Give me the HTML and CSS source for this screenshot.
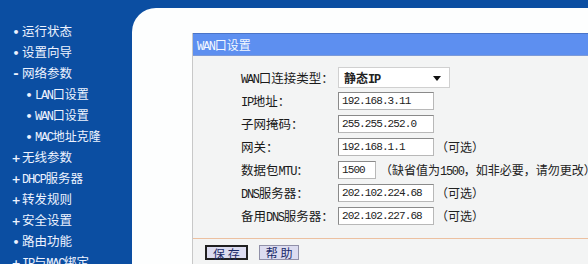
FILE: index.html
```html
<!DOCTYPE html>
<html lang="zh-CN">
<head>
    <meta charset="UTF-8">
    <title>WAN口设置</title>
    <link rel="stylesheet" href="styles.css">
</head>
<body>
    <div class="page">
        <ul class="menu">
            <li><span class="mark">•</span>运行状态</li>
            <li><span class="mark">•</span>设置向导</li>
            <li><span class="mark minus">-</span>网络参数</li>
            <li class="sub"><span class="mark">•</span><span class="lat">LAN</span>口设置</li>
            <li class="sub"><span class="mark">•</span><span class="lat">WAN</span>口设置</li>
            <li class="sub"><span class="mark">•</span><span class="lat">MAC</span>地址克隆</li>
            <li><span class="mark">+</span>无线参数</li>
            <li><span class="mark">+</span><span class="lat">DHCP</span>服务器</li>
            <li><span class="mark">+</span>转发规则</li>
            <li><span class="mark">+</span>安全设置</li>
            <li><span class="mark">•</span>路由功能</li>
            <li><span class="mark">+</span><span class="lat">IP</span>与<span class="lat">MAC</span>绑定</li>
        </ul>

        <div class="main">
            <div class="panel">
                <div class="panel-title"><span class="lat">WAN</span>口设置</div>
                <div class="form">
                    <div class="row">
                        <label><span class="lat">WAN</span>口连接类型：</label>
                        <div class="select">静态<span class="lat">IP</span><span class="arrow"></span></div>
                    </div>
                    <div class="row">
                        <label><span class="lat">IP</span>地址：</label>
                        <div class="input">192.168.3.11</div>
                    </div>
                    <div class="row">
                        <label>子网掩码：</label>
                        <div class="input">255.255.252.0</div>
                    </div>
                    <div class="row">
                        <label>网关：</label>
                        <div class="input">192.168.1.1</div>
                        <span class="note">（可选）</span>
                    </div>
                    <div class="row">
                        <label>数据包<span class="lat">MTU</span>：</label>
                        <div class="input short">1500</div>
                        <span class="note hint">（缺省值为<span class="lat">1500</span>，如非必要，请勿更改）</span>
                    </div>
                    <div class="row">
                        <label><span class="lat">DNS</span>服务器：</label>
                        <div class="input">202.102.224.68</div>
                        <span class="note">（可选）</span>
                    </div>
                    <div class="row">
                        <label>备用<span class="lat">DNS</span>服务器：</label>
                        <div class="input">202.102.227.68</div>
                        <span class="note">（可选）</span>
                    </div>
                </div>
                <div class="actions">
                    <button class="btn primary">保 存</button>
                    <button class="btn">帮 助</button>
                </div>
            </div>
        </div>
    </div>
</body>
</html>
```

FILE: styles.css
```css
body {
    margin: 0;
    padding: 0;
    background-color: #0b4ea2;
    font-family: "Noto Sans CJK SC", "Noto Sans", sans-serif;
    font-size: 12px;
    overflow: hidden;
}
.page {
    display: flex;
    width: 588px;
    height: 264px;
    overflow: hidden;
}
.lat {
    font-family: "Liberation Mono", "DejaVu Sans Mono", monospace;
    font-size: 12px;
    letter-spacing: -1.3px;
}
.menu {
    list-style: none;
    margin: 0;
    padding: 20px 0 0 0;
    width: 132px;
    flex-shrink: 0;
    color: #eef3ff;
}
.menu li {
    height: 21px;
    line-height: 21px;
    padding-left: 10px;
    white-space: nowrap;
    font-size: 12.5px;
}
.menu li.sub {
    padding-left: 23px;
    font-size: 12px;
}
.menu .mark {
    display: inline-block;
    width: 12px;
    text-align: center;
    font-family: "DejaVu Sans", sans-serif;
    font-weight: bold;
    font-size: 11px;
}
.menu .mark.minus {
    font-size: 13px;
}
.main {
    flex: 1;
    background-color: #fdfefe;
    margin-top: 8px;
    border-top-left-radius: 24px;
    padding: 25px 0 0 60px;
}
.panel {
    width: 420px;
    background-color: #f3f4f4;
    border-left: 1px solid #c8c8c8;
    border-bottom: 1px solid #d8d0c8;
}
.panel-title {
    height: 21px;
    line-height: 21px;
    background-color: #5d8ff0;
    border-top: 1px solid #4a74c8;
    border-bottom: 1px solid #7c9ad8;
    color: #f4f8ff;
    padding-left: 4px;
}
.form {
    padding: 10px 0 11px 48px;
}
.row {
    display: flex;
    align-items: center;
    height: 23px;
    color: #1a1a1a;
}
.row label {
    width: 97px;
    flex-shrink: 0;
    font-size: 12.5px;
}
.select {
    position: relative;
    width: 105px;
    height: 19px;
    line-height: 19px;
    padding-left: 5px;
    background-color: #ffffff;
    border: 1px solid #d0d0d0;
    font-weight: bold;
    color: #222;
}
.arrow {
    position: absolute;
    right: 8px;
    top: 8px;
    border-left: 4px solid transparent;
    border-right: 4px solid transparent;
    border-top: 5px solid #111;
}
.input {
    width: 91px;
    height: 16px;
    line-height: 16px;
    padding-left: 3px;
    background-color: #ffffff;
    border: 1px solid #8a8a8a;
    border-right-color: #b8b8b8;
    border-bottom-color: #b8b8b8;
    font-family: "Liberation Mono", "DejaVu Sans Mono", monospace;
    font-size: 11px;
    letter-spacing: -0.9px;
    color: #222;
}
.input.short {
    width: 33px;
}
.note {
    margin-left: 2px;
    color: #222;
    white-space: nowrap;
}
.note.hint {
    margin-left: 4px;
}
.actions {
    display: flex;
    gap: 11px;
    align-items: center;
    height: 26px;
    padding-left: 12px;
    border-top: 1px solid #ecc0a0;
    border-bottom: 1px solid #ecc8b0;
}
.btn {
    height: 15px;
    padding: 0 6px;
    background-color: #dcdcf0;
    border: 1px solid #9090a8;
    font-family: "Noto Sans CJK SC", sans-serif;
    font-size: 12px;
    line-height: 13px;
    color: #1a2a6a;
    cursor: pointer;
}
.btn.primary {
    border: 2px solid #202020;
}
```
